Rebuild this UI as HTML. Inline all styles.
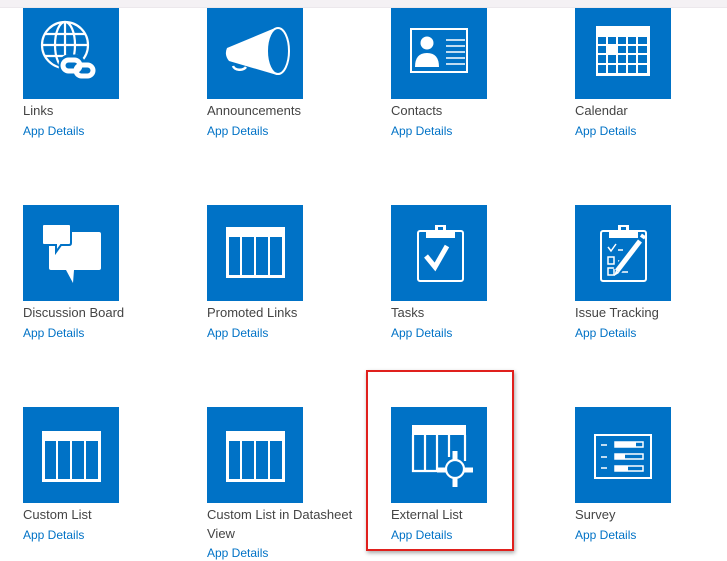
<!DOCTYPE html>
<html><head><meta charset="utf-8"><style>
body{margin:0;width:727px;height:554px;overflow:hidden;background:#fff;font-family:"Liberation Sans",Arial,sans-serif;position:relative}
.band{position:absolute;left:0;top:0;width:727px;height:7px;background:#f4f1f4;border-bottom:1px solid #ece8ec;z-index:2}
.t{position:absolute;width:96px;height:96px;background:#0072c6}
.t svg{display:block}
.n{position:absolute;font-size:13px;color:#444;line-height:20px;width:160px}
.a{position:absolute;font-size:12px;color:#0072c6;line-height:16px}
.red{position:absolute;left:366px;top:370px;width:144px;height:177px;border:2px solid #e0201d;box-shadow:1px 2px 4px rgba(0,0,0,.35)}
</style></head><body>
<div class="band"></div>

<!-- Row 1 -->
<div class="t" style="left:23px;top:3px"><svg width="96" height="96" viewBox="0 0 96 96" fill="none" stroke="#fff" stroke-width="2.2">
<circle cx="42" cy="42" r="23"/><ellipse cx="42" cy="42" rx="10" ry="23"/><line x1="42" y1="19" x2="42" y2="65"/><line x1="19" y1="42" x2="65" y2="42"/><path d="M22 31H62M22 53H55"/>
<g stroke-width="5"><rect x="40" y="56" width="18" height="12" rx="6" fill="#0072c6" stroke="#0072c6" stroke-width="9"/><rect x="40" y="57" width="17" height="11" rx="5.5"/><rect x="53" y="62" width="17" height="11" rx="5.5"/></g></svg></div>
<div class="n" style="left:23px;top:101px">Links</div><div class="a" style="left:23px;top:123px">App Details</div>

<div class="t" style="left:207px;top:3px"><svg width="96" height="96" viewBox="0 0 96 96">
<path d="M26 63a7 5 0 0 0 13 1" stroke="#fff" stroke-width="2.5" fill="none"/>
<path d="M20 45 L68 25 L70 72 L22 58 Q17 52 20 45Z" fill="#fff"/>
<ellipse cx="71" cy="48" rx="11" ry="23" fill="#0072c6" stroke="#fff" stroke-width="2"/></svg></div>
<div class="n" style="left:207px;top:101px">Announcements</div><div class="a" style="left:207px;top:123px">App Details</div>

<div class="t" style="left:391px;top:3px"><svg width="96" height="96" viewBox="0 0 96 96">
<rect x="20" y="26" width="56" height="43" fill="none" stroke="#fff" stroke-width="2"/>
<circle cx="36" cy="40" r="6.5" fill="#fff"/><path d="M24 64 Q24 50 36 50 Q48 50 48 64Z" fill="#fff"/>
<path d="M55 37H74M55 43H74M55 49H74M55 55H74M55 61H74" stroke="#fff" stroke-width="1.5"/></svg></div>
<div class="n" style="left:391px;top:101px">Contacts</div><div class="a" style="left:391px;top:123px">App Details</div>

<div class="t" style="left:575px;top:3px"><svg width="96" height="96" viewBox="0 0 96 96">
<rect x="21" y="23" width="54" height="50" fill="#fff"/>
<g fill="#0072c6"><rect x="23" y="34" width="8" height="7"/><rect x="33" y="34" width="8" height="7"/><rect x="43" y="34" width="8" height="7"/><rect x="53" y="34" width="8" height="7"/><rect x="63" y="34" width="9" height="7"/>
<rect x="23" y="43" width="8" height="7"/><rect x="53" y="43" width="8" height="7"/><rect x="63" y="43" width="9" height="7"/><rect x="43" y="43" width="8" height="7"/>
<rect x="23" y="52" width="8" height="8"/><rect x="33" y="52" width="8" height="8"/><rect x="43" y="52" width="8" height="8"/><rect x="53" y="52" width="8" height="8"/><rect x="63" y="52" width="9" height="8"/>
<rect x="23" y="62" width="8" height="8"/><rect x="33" y="62" width="8" height="8"/><rect x="43" y="62" width="8" height="8"/><rect x="53" y="62" width="8" height="8"/><rect x="63" y="62" width="9" height="8"/></g></svg></div>
<div class="n" style="left:575px;top:101px">Calendar</div><div class="a" style="left:575px;top:123px">App Details</div>

<!-- Row 2 -->
<div class="t" style="left:23px;top:205px"><svg width="96" height="96" viewBox="0 0 96 96">
<path d="M43 27 H76 Q78 27 78 29 V63 Q78 65 76 65 H51 L50 78 L43 65 H28 Q26 65 26 63 V29 Q26 27 28 27Z" fill="#fff"/>
<path d="M21 19 H46 Q48 19 48 21 V38 Q48 40 46 40 H38 L33 47 V40 H21 Q19 40 19 38 V21 Q19 19 21 19Z" fill="#fff" stroke="#0072c6" stroke-width="2"/></svg></div>
<div class="n" style="left:23px;top:303px">Discussion Board</div><div class="a" style="left:23px;top:325px">App Details</div>

<div class="t" style="left:207px;top:205px"><svg width="96" height="96" viewBox="0 0 96 96">
<rect x="19" y="22" width="59" height="51" fill="#fff"/><g fill="#0072c6"><rect x="22" y="32" width="11" height="38"/><rect x="35" y="32" width="12" height="38"/><rect x="49" y="32" width="12" height="38"/><rect x="63" y="32" width="12" height="38"/></g></svg></div>
<div class="n" style="left:207px;top:303px">Promoted Links</div><div class="a" style="left:207px;top:325px">App Details</div>

<div class="t" style="left:391px;top:205px"><svg width="96" height="96" viewBox="0 0 96 96">
<rect x="27" y="26" width="45" height="50" rx="2" fill="none" stroke="#fff" stroke-width="2"/>
<rect x="35" y="25" width="29" height="8" fill="#fff"/><rect x="44" y="20" width="11" height="7" fill="#fff"/><rect x="47" y="22" width="5" height="3" fill="#0072c6"/>
<path d="M35 51 L44 62 L56 41" stroke="#fff" stroke-width="5" fill="none"/></svg></div>
<div class="n" style="left:391px;top:303px">Tasks</div><div class="a" style="left:391px;top:325px">App Details</div>

<div class="t" style="left:575px;top:205px"><svg width="96" height="96" viewBox="0 0 96 96">
<rect x="26" y="26" width="45" height="50" rx="2" fill="none" stroke="#fff" stroke-width="2"/>
<rect x="34" y="25" width="29" height="8" fill="#fff"/><rect x="43" y="20" width="11" height="7" fill="#fff"/><rect x="46" y="22" width="5" height="3" fill="#0072c6"/>
<path d="M33 42 L36 46 L41 39M43 45H48M43 56H47M43 67H53" stroke="#fff" stroke-width="1.5" fill="none"/>
<rect x="33" y="52" width="6" height="7" fill="none" stroke="#fff" stroke-width="1.5"/><rect x="33" y="63" width="6" height="7" fill="none" stroke="#fff" stroke-width="1.5"/>
<path d="M42 66 L65 36" stroke="#0072c6" stroke-width="9"/><path d="M42 66 L65 36" stroke="#fff" stroke-width="5"/><path d="M67 33 L69 30" stroke="#fff" stroke-width="5"/><path d="M39 71 L41 65 L44 68Z" fill="#fff"/></svg></div>
<div class="n" style="left:575px;top:303px">Issue Tracking</div><div class="a" style="left:575px;top:325px">App Details</div>

<!-- Row 3 -->
<div class="t" style="left:23px;top:407px"><svg width="96" height="96" viewBox="0 0 96 96">
<rect x="19" y="24" width="59" height="51" fill="#fff"/><g fill="#0072c6"><rect x="22" y="34" width="11" height="38"/><rect x="35" y="34" width="12" height="38"/><rect x="49" y="34" width="12" height="38"/><rect x="63" y="34" width="12" height="38"/></g></svg></div>
<div class="n" style="left:23px;top:505px">Custom List</div><div class="a" style="left:23px;top:527px">App Details</div>

<div class="t" style="left:207px;top:407px"><svg width="96" height="96" viewBox="0 0 96 96">
<rect x="19" y="24" width="59" height="51" fill="#fff"/><g fill="#0072c6"><rect x="22" y="34" width="11" height="38"/><rect x="35" y="34" width="12" height="38"/><rect x="49" y="34" width="12" height="38"/><rect x="63" y="34" width="12" height="38"/></g></svg></div>
<div class="n" style="left:207px;top:505px;line-height:19px">Custom List in Datasheet<br>View</div><div class="a" style="left:207px;top:545px">App Details</div>

<div class="t" style="left:391px;top:407px"><svg width="96" height="96" viewBox="0 0 96 96">
<rect x="21" y="18" width="54" height="10" fill="#fff"/>
<path d="M22 28 V64 H46M34 28 V63M46 28 V63M58 28 V50M74 28 V54" stroke="#fff" stroke-width="2.2" fill="none"/>
<path d="M64 44 V80M46 63 H82" stroke="#fff" stroke-width="5"/>
<circle cx="64" cy="62" r="9" fill="#0072c6" stroke="#fff" stroke-width="2.2"/></svg></div>
<div class="n" style="left:391px;top:505px">External List</div><div class="a" style="left:391px;top:527px">App Details</div>

<div class="t" style="left:575px;top:407px"><svg width="96" height="96" viewBox="0 0 96 96">
<rect x="20" y="28" width="56" height="43" fill="none" stroke="#fff" stroke-width="2"/>
<path d="M26 38H32M26 50H32M26 61H32" stroke="#fff" stroke-width="1.5"/>
<g fill="none" stroke="#fff" stroke-width="1.5"><rect x="40" y="35" width="28" height="5"/><rect x="40" y="47" width="28" height="5"/><rect x="40" y="59" width="28" height="5"/></g>
<rect x="40" y="35" width="21" height="5" fill="#fff"/><rect x="40" y="47" width="10" height="5" fill="#fff"/><rect x="40" y="59" width="13" height="5" fill="#fff"/></svg></div>
<div class="n" style="left:575px;top:505px">Survey</div><div class="a" style="left:575px;top:527px">App Details</div>

<div class="red"></div>
</body></html>
